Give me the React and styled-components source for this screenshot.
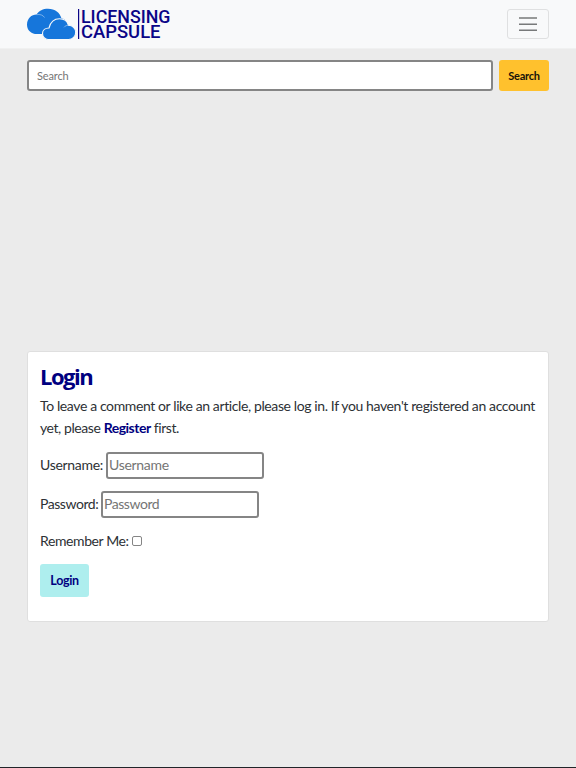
import React from "react";
import styled, { createGlobalStyle } from "styled-components";

const GlobalStyle = createGlobalStyle`
  *, *::before, *::after { box-sizing: border-box; }
  body {
    margin: 0;
    background: #ebebeb;
    color: #2d3135;
    font: 400 14px/22px Lato, "Open Sans", sans-serif;
  }
`;

const Page = styled.div`
  display: flex;
  flex-direction: column;
  height: 768px;
  overflow: hidden;
`;

const Navbar = styled.header`
  display: flex;
  flex: none;
  align-items: center;
  justify-content: space-between;
  height: 49px;
  padding: 0 27px;
  background: #f8f9fa;
  border-bottom: 1px solid #f0f1f1;
`;

const Logo = styled.svg`
  display: block;
  width: 144px;
  height: 48px;
  overflow: visible;
`;

const LogoText = styled.text`
  font-family: Roboto, sans-serif;
  font-size: 18.5px;
  font-weight: 500;
  fill: #0b0687;
`;

const Toggler = styled.button`
  display: flex;
  align-items: center;
  justify-content: center;
  width: 42px;
  height: 30px;
  padding: 0;
  background: transparent;
  border: 1px solid #dfe0e1;
  border-radius: 3px;
`;

const Content = styled.main`
  display: flex;
  flex: 1;
  flex-direction: column;
  padding: 11px 27px 0;
`;

const SearchForm = styled.form`
  display: flex;
  gap: 6px;
  height: 31px;
`;

const Field = styled.input`
  width: 158px;
  height: 27px;
  padding: 0 1px 2px;
  background: #fff;
  border: 2px solid #858585;
  border-radius: 3px;
  font: inherit;
  letter-spacing: ${(p) => p.$tracking};
  &::placeholder { color: #757575; opacity: 1; }
`;

const SearchField = styled(Field)`
  flex: 1;
  height: 31px;
  padding: 0 8px 1px;
  font-size: 11px;
`;

const Button = styled.button`
  padding: 0;
  border: 0;
  border-radius: 3px;
  font: inherit;
  font-weight: 700;
`;

const SearchButton = styled(Button)`
  width: 50px;
  height: 31px;
  background: #ffc12d;
  color: #171309;
  font-size: 11px;
  letter-spacing: -0.25px;
`;

const LoginButton = styled(Button)`
  width: 49px;
  height: 33px;
  margin-top: 12px;
  background: #aeeeee;
  color: #000080;
  font-size: 12.5px;
  letter-spacing: -0.35px;
`;

const Card = styled.section`
  height: 271px;
  margin-top: 260px;
  padding: 11px 12px 0;
  background: #fff;
  border: 1px solid #dfdfdf;
  border-radius: 3px;
`;

const Title = styled.h1`
  margin: 0 0 5px;
  color: #000080;
  font: 700 22px/27px "Open Sans", sans-serif;
  letter-spacing: -1.5px;
`;

const Intro = styled.p`
  margin: 0 0 13px;
  white-space: nowrap;
`;

const Line = styled.span`
  display: block;
  letter-spacing: ${(p) => p.$tracking};
`;

const Register = styled.a`
  color: #000080;
  font-weight: 700;
  letter-spacing: -0.5px;
`;

const FormRow = styled.div`
  display: flex;
  align-items: center;
  gap: 3px;
  height: ${(p) => p.$height};
  margin-bottom: ${(p) => p.$gap || 0};
`;

const Label = styled.label`
  flex: none;
  width: ${(p) => p.$width};
  padding-bottom: ${(p) => p.$lift || 0};
  letter-spacing: ${(p) => p.$tracking};
  white-space: nowrap;
`;

const Checkbox = styled.input`
  width: 10px;
  height: 10px;
  margin: 0;
  appearance: none;
  background: #fff;
  border: 1px solid #858585;
  border-radius: 2px;
`;

const Footer = styled.footer`
  flex: none;
  height: 1px;
  background: #212529;
`;

export default function App() {
  return (
    <>
      <GlobalStyle />
      <Page>
        <Navbar>
          <Logo viewBox="0 0 144 48" role="img" aria-label="Licensing Capsule">
            <path fill="#1676db" d="M8 34C3 33 0 29.500 0 24.500C0 18.500 4.500 14.500 9.500 14.500C12 10.500 16 8.700 21 8.700C28 8.700 33 12.500 34.500 18.500C39 19 42 23 40 30L17 34Z" />
            <path d="M9.500 14.700C13 14 16 15 17.500 17.500" fill="none" stroke="#d3e4f7" strokeWidth=".5" />
            <path fill="#1676db" stroke="#f8f9fa" strokeWidth="1.100" d="M21 39.500C18 39.500 15.500 36.800 15.500 33.500C15.500 30 18.500 28 22 28C23.500 22 27 18.800 32.500 18.800C37 18.800 40.500 21.500 41.500 25.300C45.500 25.300 48.700 28.400 48.700 32.300C48.700 36.500 45.700 39.500 41.500 39.500Z" />
            <path d="M41.500 25.300C39.400 25.300 38 26 37 27.300" fill="none" stroke="#d3e4f7" strokeWidth=".5" />
            <rect x="51" y="9" width="1.200" height="30" fill="#0b0687" />
            <LogoText x="54" y="23.300" textLength="89.500" lengthAdjust="spacingAndGlyphs">LICENSING</LogoText>
            <LogoText x="54" y="38" textLength="79.500" lengthAdjust="spacingAndGlyphs">CAPSULE</LogoText>
          </Logo>
          <Toggler aria-label="Toggle navigation">
            <svg width="20" height="16" viewBox="0 0 20 16" stroke="#77797a" strokeWidth="1.600">
              <path d="M1 2H19M1 8.200H19M1 14.300H19" />
            </svg>
          </Toggler>
        </Navbar>
        <Content>
          <SearchForm>
            <SearchField placeholder="Search" $tracking="-0.15px" />
            <SearchButton type="button">Search</SearchButton>
          </SearchForm>
          <Card>
            <Title>Login</Title>
            <Intro>
              <Line $tracking="-0.385px">To leave a comment or like an article, please log in. If you haven't registered an account</Line>
              <Line $tracking="-0.42px">yet, please <Register>Register</Register> first.</Line>
            </Intro>
            <FormRow $height="27px" $gap="12px">
              <Label htmlFor="username" $width="63px" $tracking="-0.3px" $lift="1px">Username:</Label>
              <Field id="username" placeholder="Username" $tracking="-0.3px" />
            </FormRow>
            <FormRow $height="27px" $gap="12px">
              <Label htmlFor="password" $width="58px" $tracking="-0.45px" $lift="1px">Password:</Label>
              <Field id="password" type="password" placeholder="Password" $tracking="-0.45px" />
            </FormRow>
            <FormRow $height="22px">
              <Label htmlFor="remember" $width="89px" $tracking="-0.4px">Remember Me:</Label>
              <Checkbox id="remember" type="checkbox" />
            </FormRow>
            <LoginButton type="button">Login</LoginButton>
          </Card>
        </Content>
        <Footer />
      </Page>
    </>
  );
}
